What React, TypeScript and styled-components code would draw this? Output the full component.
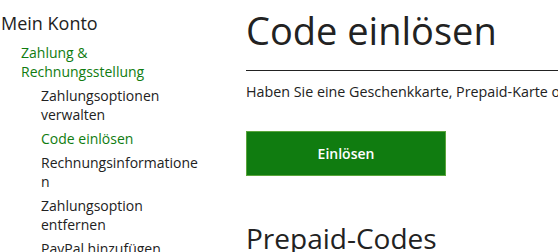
import React from "react";
import styled, { createGlobalStyle } from "styled-components";

const Global = createGlobalStyle`
  html, body { margin: 0; padding: 0; background: #fff; overflow: hidden; }
  body { font-family: "Open Sans", "Noto Sans", sans-serif; color: #222; }
`;

const Page = styled.div`
  display: flex;
  width: 558px;
  height: 252px;
  overflow: hidden;
`;

const Sidebar = styled.nav`
  flex: 0 0 200px;
  width: 200px;
  min-width: 0;
  padding-left: 1px;
  box-sizing: border-box;
  overflow-wrap: anywhere;
`;

const SideTitle = styled.div`
  font-size: 18px;
  line-height: 24px;
  margin-top: 11px;
  color: #222;
`;

const Group = styled.div`
  padding-left: 20px;
  margin-top: 8px;
`;

const NavLink = styled.a<{ $active?: boolean }>`
  display: block;
  font-size: 14px;
  line-height: 19px;
  color: ${(p) => (p.$active ? "#107c10" : "#222")};
  text-decoration: none;
`;

const SubList = styled.ul`
  list-style: none;
  margin: 5px 0 0;
  padding: 0 0 0 20px;
  display: flex;
  flex-direction: column;
  gap: 5px;
`;

const Main = styled.main`
  flex: 1;
  margin-left: 46px;
  min-width: 0;
`;

const Heading = styled.h1`
  font-size: 38px;
  font-weight: 400;
  line-height: 48px;
  margin: 6px 0 0;
  color: #222;
  white-space: nowrap;
`;

const Rule = styled.hr`
  border: 0;
  border-top: 1px solid #222;
  margin: 16px 0 0;
`;

const Intro = styled.p`
  font-size: 14.3px;
  line-height: 20px;
  margin: 11px 0 0;
  white-space: nowrap;
`;

const Button = styled.button`
  display: block;
  width: 200px;
  height: 45px;
  margin-top: 29px;
  background: #107c10;
  border: 1px solid #5aa53c;
  color: #fff;
  font-family: inherit;
  font-weight: 600;
  font-size: 14px;
`;

const SubHeading = styled.h2`
  font-size: 28px;
  font-weight: 400;
  line-height: 36px;
  margin: 44px 0 0;
  color: #222;
`;

const items = [
  { label: "Zahlungsoptionen verwalten" },
  { label: "Code einlösen", active: true },
  { label: "Rechnungsinformationen" },
  { label: "Zahlungsoption entfernen" },
  { label: "PayPal hinzufügen" },
];

export default function App() {
  return (
    <>
      <Global />
      <Page>
        <Sidebar>
          <SideTitle>Mein Konto</SideTitle>
          <Group>
            <NavLink $active href="#">Zahlung &amp; Rechnungsstellung</NavLink>
            <SubList>
              {items.map((it) => (
                <li key={it.label}>
                  <NavLink $active={it.active} href="#">{it.label}</NavLink>
                </li>
              ))}
            </SubList>
          </Group>
        </Sidebar>
        <Main>
          <Heading>Code einlösen</Heading>
          <Rule />
          <Intro>Haben Sie eine Geschenkkarte, Prepaid-Karte oder einen Code?</Intro>
          <Button>Einlösen</Button>
          <SubHeading>Prepaid-Codes</SubHeading>
        </Main>
      </Page>
    </>
  );
}
